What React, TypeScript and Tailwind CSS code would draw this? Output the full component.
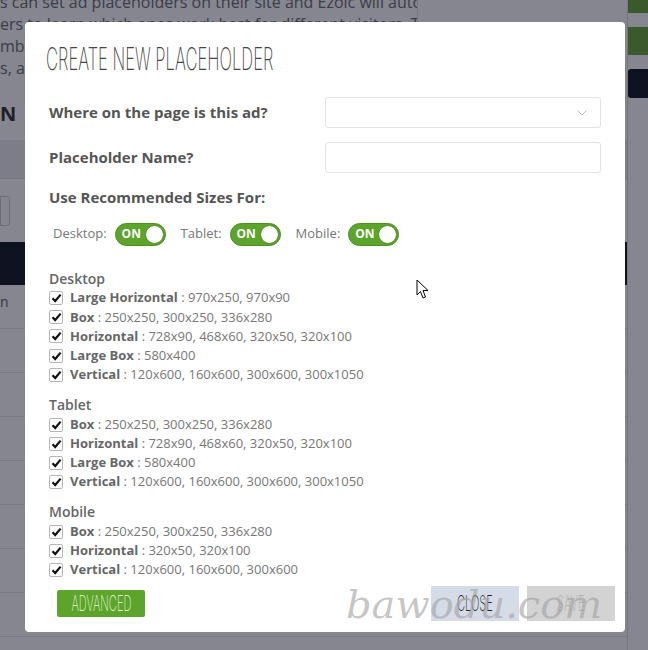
import { ChevronDown } from "lucide-react";

const narrow = "inline-block font-['Inter',sans-serif] font-extralight";

type Size = { name: string; sizes: string };

const groups: { title: string; items: Size[] }[] = [
  {
    title: "Desktop",
    items: [
      { name: "Large Horizontal", sizes: "970x250, 970x90" },
      { name: "Box", sizes: "250x250, 300x250, 336x280" },
      { name: "Horizontal", sizes: "728x90, 468x60, 320x50, 320x100" },
      { name: "Large Box", sizes: "580x400" },
      { name: "Vertical", sizes: "120x600, 160x600, 300x600, 300x1050" },
    ],
  },
  {
    title: "Tablet",
    items: [
      { name: "Box", sizes: "250x250, 300x250, 336x280" },
      { name: "Horizontal", sizes: "728x90, 468x60, 320x50, 320x100" },
      { name: "Large Box", sizes: "580x400" },
      { name: "Vertical", sizes: "120x600, 160x600, 300x600, 300x1050" },
    ],
  },
  {
    title: "Mobile",
    items: [
      { name: "Box", sizes: "250x250, 300x250, 336x280" },
      { name: "Horizontal", sizes: "320x50, 320x100" },
      { name: "Vertical", sizes: "120x600, 160x600, 300x600" },
    ],
  },
];

function Toggle({ label }: { label: string }) {
  return (
    <div className="flex items-center gap-[8px]">
      <span className="text-[13px] text-[#777]">{label}</span>
      <div className="flex items-center justify-between w-[51px] h-[23px] rounded-full bg-[#5da42c] border border-[#4e8f22] pl-[6px] pr-[1px]">
        <span className="text-[12px] font-bold text-white leading-none">ON</span>
        <span className="w-[19px] h-[19px] rounded-full bg-white border border-[#4e8f22]" />
      </div>
    </div>
  );
}

function Check() {
  return (
    <span className="flex items-center justify-center w-[14px] h-[14px] border border-[#b5b5b5] rounded-[2px] bg-white">
      <svg width="11" height="10" viewBox="0 0 11 10">
        <path d="M1.5 5.2 L4.2 8 L9.6 1.6" fill="none" stroke="#111" strokeWidth="2.2" />
      </svg>
    </span>
  );
}

function BackgroundPage() {
  return (
    <div className="flex h-full">
      <div className="w-[627px] flex flex-col">
        <div className="h-[140px] flex">
          <div className="w-[418px] border-r border-[#ddd] text-[16px] leading-[22px] text-[#6c6c6c] -mt-[9px] whitespace-nowrap overflow-hidden">
            <p>s can set ad placeholders on their site and Ezoic will automatically test</p>
            <p>ers to learn which ones work best for different visitors. The machine</p>
            <p>mbinations of ad placements, sizes and types for each visitor</p>
            <p>s, and ad revenue for every page view.</p>
            <p className="mt-[24px] text-[20px] font-bold text-[#333]">N</p>
          </div>
        </div>
        <div className="h-[38px] bg-[#ececef]" />
        <div className="h-[64px] border-t border-[#ddd] flex items-center">
          <div className="w-[10px] h-[30px] border border-[#ccc] rounded-r-[3px]" />
        </div>
        <div className="h-[43px] bg-[#12161f]" />
        {["n", "", "", "", "", "", "", ""].map((t, i) => (
          <div key={i} className="h-[44px] border-b border-[#e4e4e4] text-[14px] text-[#666] pt-[6px]">
            {t}
          </div>
        ))}
      </div>
      <div className="flex-1 flex flex-col gap-[14px] border-l border-[#ddd]">
        <div className="h-[13px] bg-[#6aa533]" />
        <div className="h-[28px] bg-[#6aa533]" />
        <div className="h-[29px] bg-[#12161f] rounded-l-[3px]" />
      </div>
    </div>
  );
}

export default function App() {
  return (
    <div className="relative w-[648px] h-[650px] overflow-hidden bg-white font-['Open_Sans',sans-serif]">
      <BackgroundPage />
      <div className="absolute inset-0 bg-[#0b0d22]/50" />

      <div className="absolute left-[25px] top-[22px] w-[600px] h-[610px] bg-white rounded-[4px] pl-[24px] pr-[24px] pt-[18px]">
        <h1 className="h-[38px] whitespace-nowrap">
          <span className={`${narrow} origin-left scale-x-[0.535] text-[31px] leading-[38px] text-[#444] -ml-[3px]`}>
            CREATE NEW PLACEHOLDER
          </span>
        </h1>

        <div className="mt-[19px] flex flex-col gap-[14px]">
          <div className="flex items-center">
            <label className="w-[276px] text-[15px] font-bold text-[#555]">Where on the page is this ad?</label>
            <div className="flex-1 h-[31px] border border-[#e3e3e3] rounded-[3px] flex items-center justify-end pr-[10px]">
              <ChevronDown size={16} strokeWidth={1} className="text-[#999]" />
            </div>
          </div>
          <div className="flex items-center">
            <label className="w-[276px] text-[15px] font-bold text-[#555]">Placeholder Name?</label>
            <div className="flex-1 h-[31px] border border-[#e3e3e3] rounded-[3px]" />
          </div>
        </div>

        <p className="mt-[13px] text-[15px] font-bold text-[#555]">Use Recommended Sizes For:</p>

        <div className="mt-[14px] ml-[4px] flex items-center gap-[15px]">
          <Toggle label="Desktop:" />
          <Toggle label="Tablet:" />
          <Toggle label="Mobile:" />
        </div>

        <div className="mt-[23px] flex flex-col gap-[10.5px]">
          {groups.map((g) => (
            <div key={g.title}>
              <p className="text-[14px] font-semibold text-[#666] leading-[20px]">{g.title}</p>
              {g.items.map((it) => (
                <div key={it.name} className="flex items-center gap-[7px] h-[19.2px] text-[13px]">
                  <Check />
                  <span className="text-[#777] whitespace-nowrap">
                    <span className="font-bold text-[#666]">{it.name}</span> : {it.sizes}
                  </span>
                </div>
              ))}
            </div>
          ))}
        </div>

        <div className="mt-[6px] flex items-center justify-between">
          <button className="ml-[8px] w-[88px] h-[27px] bg-[#5da42c] rounded-[2px] flex items-center justify-center">
            <span className={`${narrow} origin-center scale-x-[0.53] text-[21px] text-[#e2f7c9] -mx-[30px]`}>ADVANCED</span>
          </button>
          <div className="flex gap-[8px] -mr-[14px]">
            <button className="w-[88px] h-[35px] bg-[#d5dce8] flex items-center justify-center">
              <span className={`${narrow} origin-center scale-x-[0.53] text-[21px] text-[#222]`}>CLOSE</span>
            </button>
            <button className="w-[88px] h-[35px] bg-[#d3d3d3] flex items-center justify-center">
              <span className={`${narrow} origin-center scale-x-[0.53] text-[21px] text-[#b0b0b0]`}>SAVE</span>
            </button>
          </div>
        </div>
      </div>

      <span className="absolute left-[346px] top-[574px] font-['DejaVu_Serif',serif] italic text-[40px] text-[#a0a0a0]/60 pointer-events-none">
        bawodu.com
      </span>

      <svg className="absolute left-[416px] top-[279px]" width="13" height="21" viewBox="0 0 13 21">
        <path d="M1 1 L1 16 L4.5 12.5 L7 19 L9.5 18 L7 11.5 L12 11.5 Z" fill="white" stroke="black" strokeWidth="1" />
      </svg>
    </div>
  );
}
